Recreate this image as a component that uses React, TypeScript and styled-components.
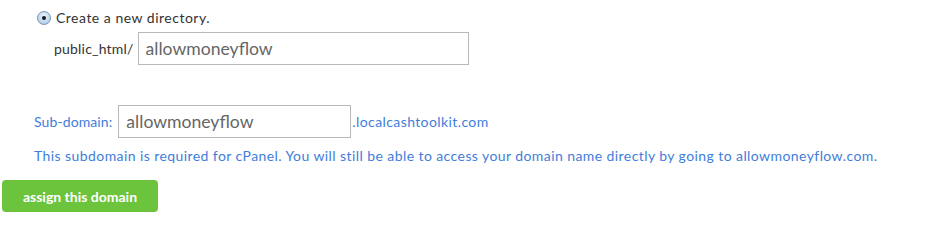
import styled, { createGlobalStyle } from 'styled-components'

const GlobalStyle = createGlobalStyle`
  body {
    margin: 0;
    background: #fff;
    font-family: Lato, 'Open Sans', sans-serif;
  }
`

const Page = styled.div`
  display: flex;
  flex-direction: column;
  padding: 9px 0 0 2px;
`

const Section = styled.div`
  display: flex;
  flex-direction: column;
  padding-left: 32px;
`

const RadioRow = styled.label`
  display: flex;
  align-items: center;
  gap: 5px;
  padding-left: 3px;
  font-size: 14px;
  letter-spacing: 0.5px;
  color: #333;
`

const Radio = styled.span`
  display: inline-block;
  position: relative;
  width: 12px;
  height: 12px;
  border-radius: 50%;
  border: 1px solid #7f93a8;
  background: radial-gradient(circle at 50% 35%, #eaf3fd 0%, #b7d3f0 70%, #8fb6e0 100%);

  &::after {
    content: '';
    position: absolute;
    left: 4px;
    top: 4px;
    width: 4px;
    height: 4px;
    border-radius: 50%;
    background: #1a1a1a;
  }
`

const DirRow = styled.div`
  display: flex;
  align-items: center;
  gap: 4px;
  margin-top: 6px;
  padding-left: 20px;
`

const Label = styled.span<{ $blue?: boolean }>`
  font-size: 14px;
  letter-spacing: ${(p) => (p.$blue ? '0.1px' : '0.2px')};
  color: ${(p) => (p.$blue ? '#3f7ddb' : '#333')};
`

const Field = styled.input<{ $w: number }>`
  box-sizing: border-box;
  width: ${(p) => p.$w}px;
  height: 33px;
  border: 1px solid #b8b8b8;
  padding: 0 7px;
  font-family: Lato, 'Open Sans', sans-serif;
  font-size: 17.6px;
  color: #666;
  outline: none;
`

const SubRow = styled.div`
  display: flex;
  align-items: center;
  gap: 6px;
  margin-top: 40px;
`

const Suffix = styled.span`
  font-size: 14px;
  letter-spacing: 0.4px;
  color: #3f7ddb;
  margin-left: -5px;
`

const Help = styled.p`
  margin: 9px 0 0;
  font-size: 14px;
  letter-spacing: 0.42px;
  color: #3f7ddb;
  white-space: nowrap;
`

const Button = styled.button`
  align-self: flex-start;
  margin-top: 16px;
  width: 156px;
  height: 32px;
  border: none;
  border-radius: 4px;
  background: #6cc43c;
  color: #fff;
  font-family: Lato, 'Open Sans', sans-serif;
  font-size: 14px;
  font-weight: 700;
  cursor: pointer;
`

export default function App() {
  return (
    <>
      <GlobalStyle />
      <Page>
        <Section>
          <RadioRow>
            <Radio />
            Create a new directory.
          </RadioRow>
          <DirRow>
            <Label>public_html/</Label>
            <Field $w={331} defaultValue='allowmoneyflow' />
          </DirRow>
          <SubRow>
            <Label $blue>Sub-domain:</Label>
            <Field $w={233} defaultValue='allowmoneyflow' />
            <Suffix>.localcashtoolkit.com</Suffix>
          </SubRow>
          <Help>
            This subdomain is required for cPanel. You will still be able to access your domain name
            directly by going to allowmoneyflow.com.
          </Help>
        </Section>
        <Button type='button'>assign this domain</Button>
      </Page>
    </>
  )
}
